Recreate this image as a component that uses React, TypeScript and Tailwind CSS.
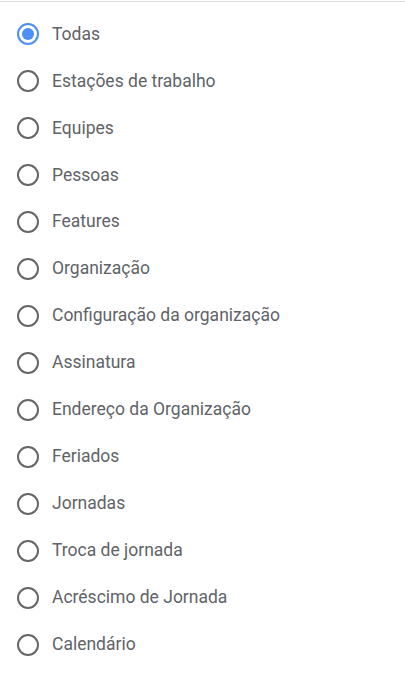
import { useState } from "react";

const options = [
  "Todas",
  "Estações de trabalho",
  "Equipes",
  "Pessoas",
  "Features",
  "Organização",
  "Configuração da organização",
  "Assinatura",
  "Endereço da Organização",
  "Feriados",
  "Jornadas",
  "Troca de jornada",
  "Acréscimo de Jornada",
  "Calendário",
];

export default function App() {
  const [selected, setSelected] = useState("Todas");

  return (
    <div className="min-h-[677px] bg-white pt-px font-['Roboto',sans-serif]">
      <div className="border-t border-[#dcdcdc]">
        <ul className="flex flex-col pt-[9px]">
          {options.map((opt) => {
            const active = opt === selected;
            return (
              <li key={opt}>
                <label className="flex h-[46.95px] cursor-pointer items-center gap-[13px] pl-[17px]">
                  <input
                    type="radio"
                    name="filter"
                    className="sr-only"
                    checked={active}
                    onChange={() => setSelected(opt)}
                  />
                  <span
                    className={`flex h-[22px] w-[22px] items-center justify-center rounded-full border-2 ${
                      active ? "border-[#4d8ef7]" : "border-[#666666]"
                    }`}
                  >
                    {active && <span className="h-[12px] w-[12px] rounded-full bg-[#4d8ef7]" />}
                  </span>
                  <span className="text-[17.5px] leading-none text-[#5f6368]">{opt}</span>
                </label>
              </li>
            );
          })}
        </ul>
      </div>
    </div>
  );
}
